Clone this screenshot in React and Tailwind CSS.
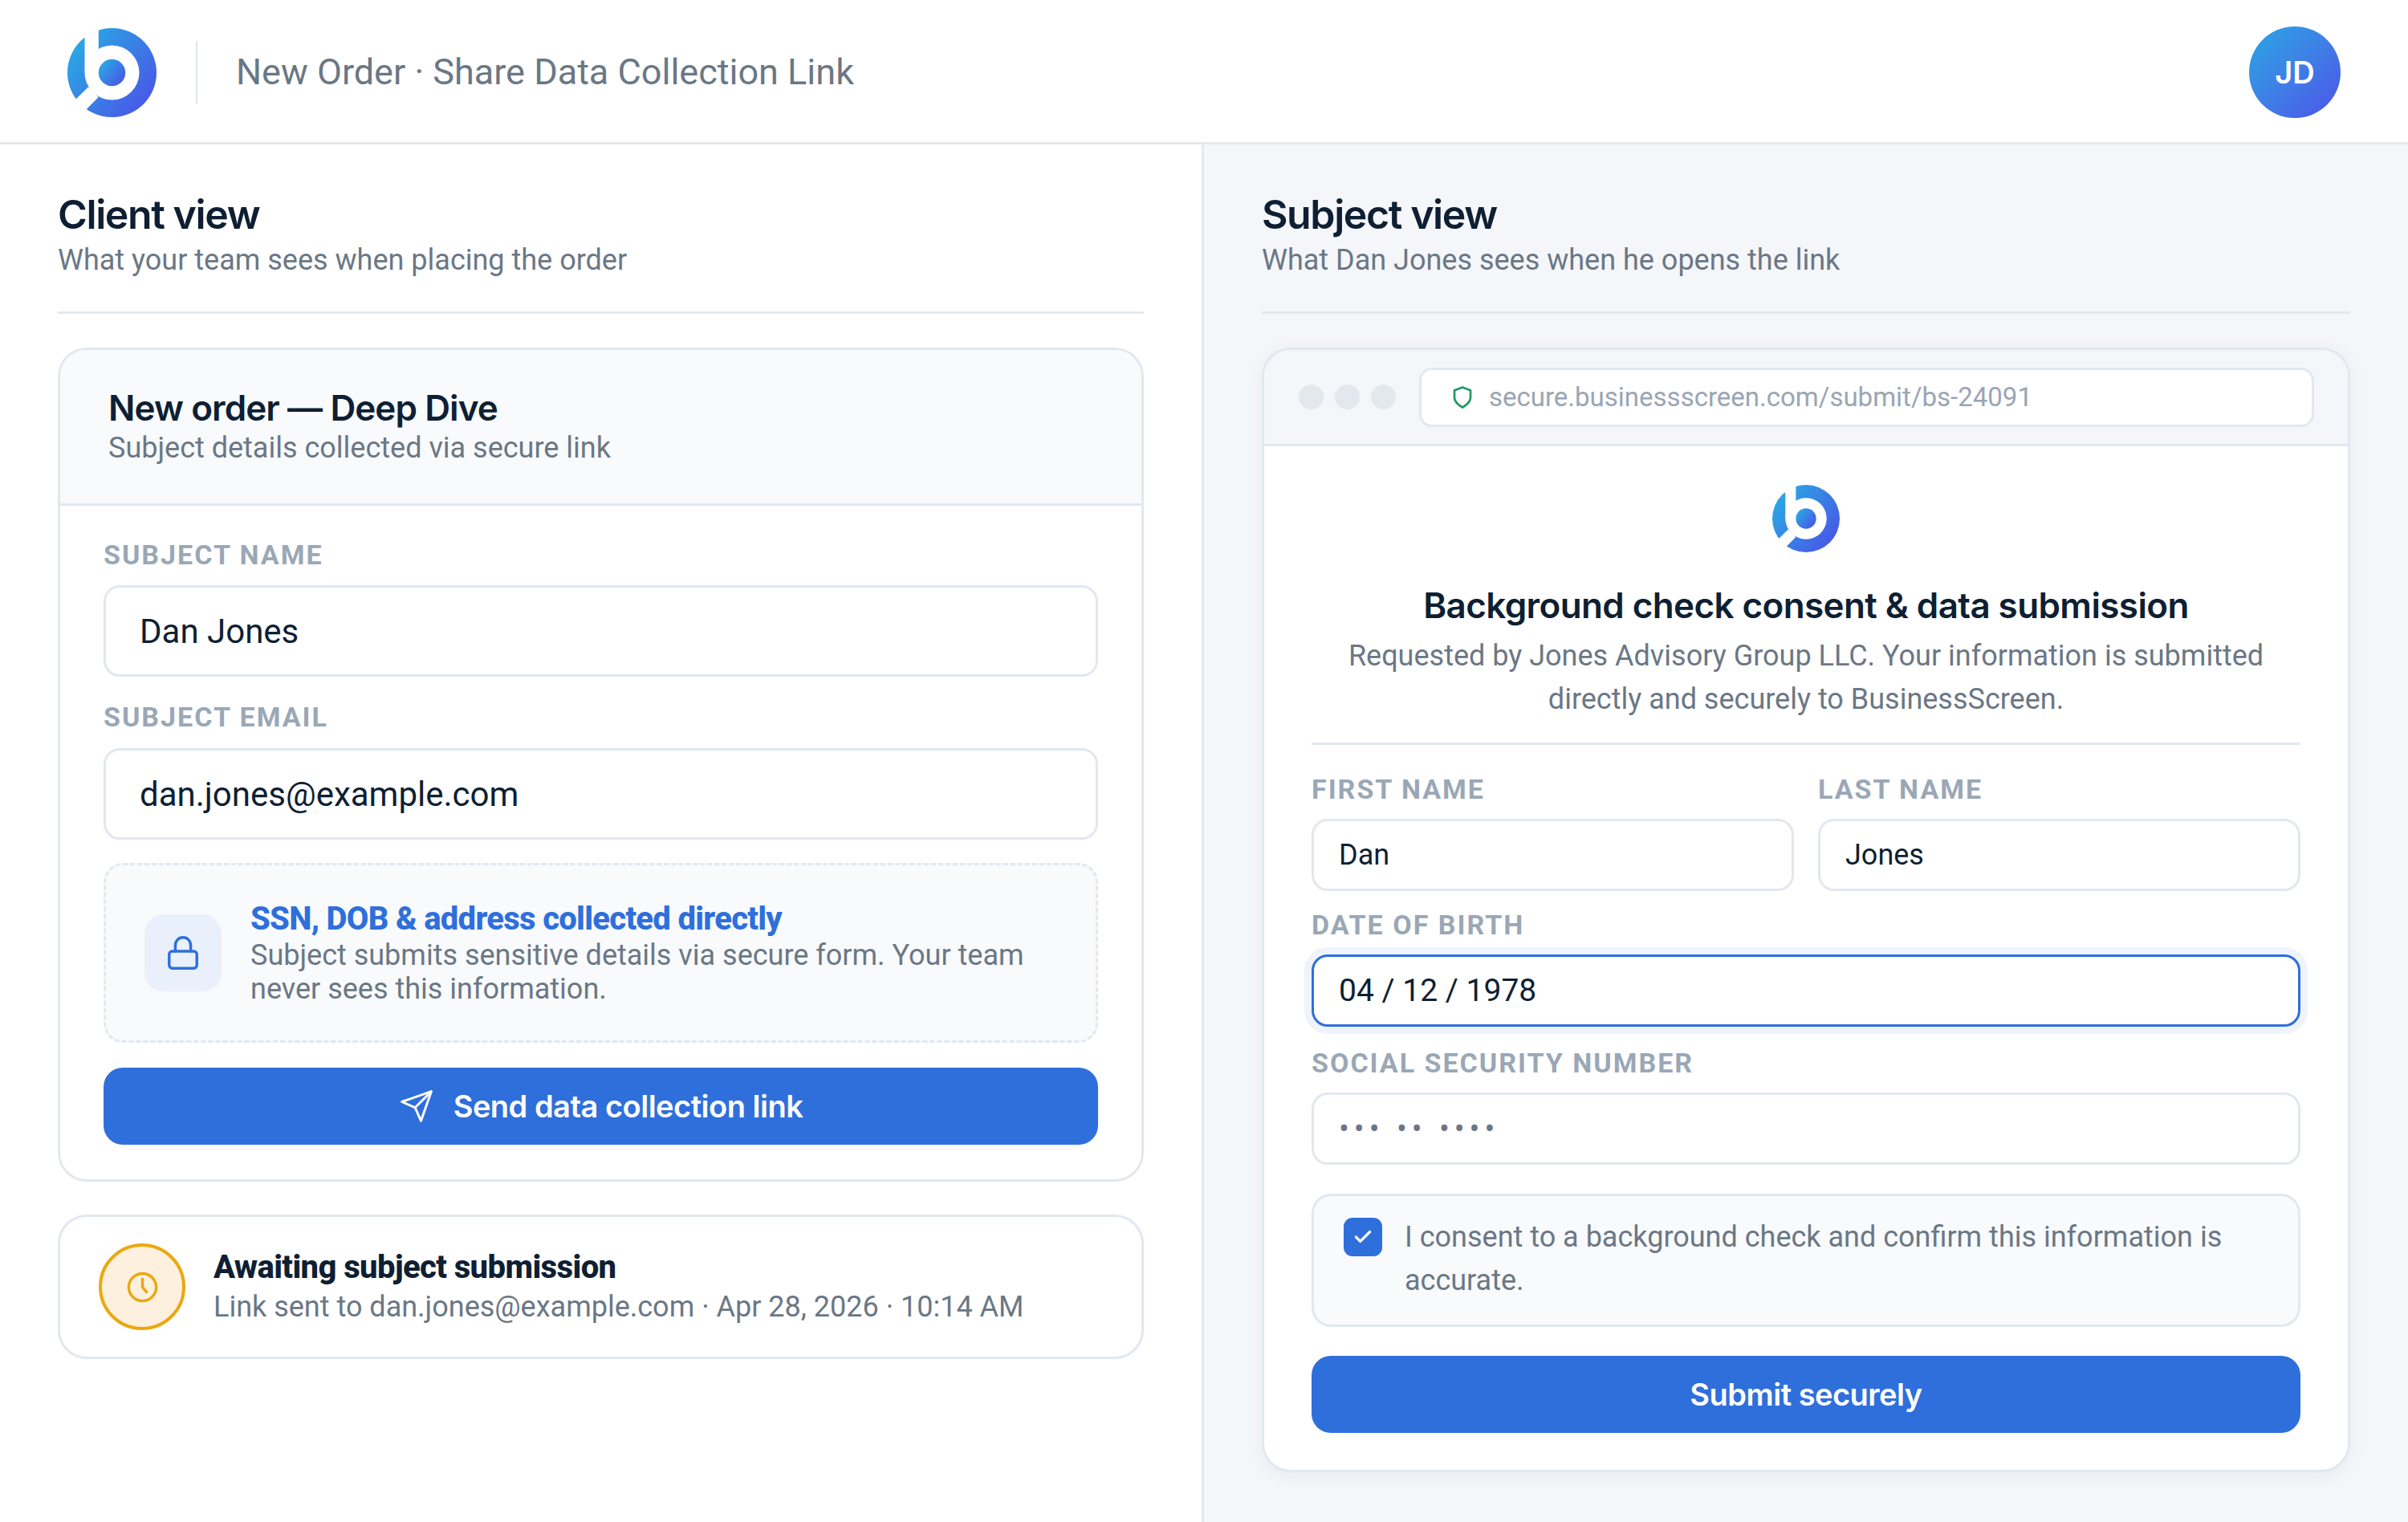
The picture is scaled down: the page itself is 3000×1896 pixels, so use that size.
import { FiSend, FiShield } from 'react-icons/fi'
import { Lock, Check } from 'lucide-react'

const Logo = ({ id, className }) => (
  <svg viewBox="0 0 111 111" className={className}>
    <defs>
      <linearGradient id={id} x1="0" y1="0.1" x2="1" y2="0.9">
        <stop offset="0" stopColor="#27b0e3" />
        <stop offset="1" stopColor="#4b50e8" />
      </linearGradient>
    </defs>
    <circle cx="55.5" cy="55.5" r="55.5" fill={`url(#${id})`} />
    <rect x="21.5" y="-1" width="17.3" height="56" fill="#fff" />
    <polygon points="26,73.3 38.7,86 14,111 -1,100" fill="#fff" />
    <circle cx="55.5" cy="55.5" r="34" fill="#fff" />
    <circle cx="55.5" cy="55.5" r="16.7" fill={`url(#${id})`} />
  </svg>
)

const Label = ({ children }) => (
  <div className="text-[34px] leading-[42px] font-bold tracking-[2px] text-[#9aa7b6] uppercase">{children}</div>
)

const BigInput = ({ children }) => (
  <div className="h-[114px] rounded-[20px] border-[3px] border-[#e2e8f0] bg-white px-[42px] flex items-center text-[42px] text-[#0f1f33]">
    {children}
  </div>
)

const SmallInput = ({ children, className }) => (
  <div className={`h-[90px] rounded-[20px] border-[3px] bg-white px-[31px] flex items-center ${className}`}>
    {children}
  </div>
)

const PanelHead = ({ title, sub }) => (
  <div className="h-[155px] border-b-[3px] border-[#e2e8f0] mb-[42px]">
    <h2 className="font-['Inter',sans-serif] text-[50px] leading-[62px] font-semibold tracking-[-1.4px] text-[#0f1f33] mt-[-4px]">{title}</h2>
    <p className="text-[36px] leading-[46px] text-[#6b7785] mt-[3px]">{sub}</p>
  </div>
)

export default function App() {
  return (
    <div className="w-[3000px] h-[1896px] bg-white flex flex-col overflow-hidden font-['Roboto',sans-serif]">
      {/* top bar */}
      <header className="h-[180px] shrink-0 border-b-[3px] border-[#e5e8ee] pl-[84px] pr-[84px] pt-[3px] flex items-center">
        <Logo id="logo-top" className="w-[111px] h-[111px]" />
        <div className="w-[2px] h-[78px] bg-[#dfe4ea] ml-[49px] mr-[48px]" />
        <div className="text-[45px] text-[#6b7785]">New Order · Share Data Collection Link</div>
        <div className="ml-auto w-[114px] h-[114px] rounded-full bg-gradient-to-br from-[#27a6e3] to-[#4b50e8] flex items-center justify-center font-['Inter',sans-serif] font-semibold text-[38px] text-white">
          JD
        </div>
      </header>

      <main className="flex-1 grid grid-cols-2">
        {/* client */}
        <section className="border-r-[3px] border-[#e5e8ee] pt-[60px] px-[72px]">
          <PanelHead title="Client view" sub="What your team sees when placing the order" />
          <div className="rounded-[36px] border-[3px] border-[#e2e8f0] overflow-hidden">
            <div className="h-[194px] bg-[#f8fafc] border-b-[3px] border-[#e2e8f0] px-[60px] flex flex-col justify-center">
              <div className="font-['Inter',sans-serif] text-[44px] leading-[54px] font-semibold tracking-[-0.9px] text-[#0f1f33] mt-[-2px]">New order — Deep Dive</div>
              <div className="text-[36px] leading-[46px] text-[#6b7785]">Subject details collected via secure link</div>
            </div>
            <div className="px-[54px] pt-[40px] pb-[43px]">
              <Label>Subject name</Label>
              <div className="mt-[17px]"><BigInput>Dan Jones</BigInput></div>
              <div className="mt-[29px]"><Label>Subject email</Label></div>
              <div className="mt-[18px]"><BigInput>dan.jones@example.com</BigInput></div>
              <div className="mt-[29px] h-[224px] rounded-[24px] border-[3px] border-dashed border-[#e2e8f0] bg-[#f8fafc] px-[48px] flex items-center gap-[36px]">
                <div className="w-[96px] h-[96px] shrink-0 rounded-[24px] bg-[#e9f0fb] flex items-center justify-center">
                  <Lock size={46} strokeWidth={1.8} className="text-[#2f6fdb]" />
                </div>
                <div>
                  <div className="text-[40px] leading-[48px] font-extrabold tracking-[-0.7px] text-[#2f6fdb]">SSN, DOB &amp; address collected directly</div>
                  <div className="text-[36px] leading-[42px] text-[#6b7785]">Subject submits sensitive details via secure form. Your team never sees this information.</div>
                </div>
              </div>
              <button className="mt-[31px] w-full h-[96px] rounded-[24px] bg-[#2f6fdb] flex items-center justify-center gap-[24px] text-white font-['Inter',sans-serif] font-semibold text-[38px] tracking-[-0.5px]">
                <FiSend size={44} strokeWidth={1.6} />
                Send data collection link
              </button>
            </div>
          </div>
          <div className="mt-[41px] h-[180px] rounded-[36px] border-[3px] border-[#e2e8f0] pl-[48px] pr-[47px] flex items-center gap-[35px]">
            <div className="w-[108px] h-[108px] shrink-0 rounded-full border-[4px] border-[#eba80f] bg-[#fdf0de] flex items-center justify-center">
              <svg viewBox="0 0 24 24" className="w-[41px] h-[41px]" fill="none" stroke="#eba80f" strokeWidth="2" strokeLinecap="round" strokeLinejoin="round">
                <circle cx="12" cy="12" r="10" />
                <path d="M12 6v6l3 3.6" />
              </svg>
            </div>
            <div>
              <div className="text-[40px] leading-[48px] font-extrabold tracking-[-0.6px] text-[#0f1f33]">Awaiting subject submission</div>
              <div className="text-[36px] leading-[46px] text-[#6b7785] mt-[2px]">Link sent to dan.jones@example.com · Apr 28, 2026 · 10:14 AM</div>
            </div>
          </div>
        </section>

        {/* subject */}
        <section className="bg-[#f4f6fa] pt-[60px] px-[72px]">
          <PanelHead title="Subject view" sub="What Dan Jones sees when he opens the link" />
          <div className="rounded-[36px] border-[3px] border-[#e2e8f0] bg-white overflow-hidden shadow-[0_4px_24px_rgba(15,31,51,0.05)]">
            <div className="h-[120px] bg-[#f4f6fa] border-b-[3px] border-[#e2e8f0] pl-[43px] pr-[42px] flex items-center">
              <div className="flex gap-[14px]">
                <div className="w-[31px] h-[31px] rounded-full bg-[#e2e8ee]" />
                <div className="w-[31px] h-[31px] rounded-full bg-[#e2e8ee]" />
                <div className="w-[31px] h-[31px] rounded-full bg-[#e2e8ee]" />
              </div>
              <div className="ml-[29px] flex-1 h-[74px] rounded-[16px] border-[3px] border-[#e2e8f0] bg-white pl-[36px] flex items-center gap-[18px] text-[33px] text-[#9aa5b4]">
                <FiShield size={30} strokeWidth={2.2} className="text-[#1e9a63]" />
                secure.businessscreen.com/submit/bs-24091
              </div>
            </div>
            <div className="px-[59px] pt-[48px] pb-[46px]">
              <div className="flex justify-center"><Logo id="logo-form" className="w-[84px] h-[84px]" /></div>
              <div className="mt-[39px] text-center font-['Inter',sans-serif] text-[44px] leading-[54px] font-semibold tracking-[-0.6px] text-[#0f1f33]">
                Background check consent &amp; data submission
              </div>
              <div className="mt-[9px] mx-auto w-[1180px] text-center text-[36px] leading-[54px] text-[#6b7785]">
                Requested by Jones Advisory Group LLC. Your information is submitted directly and securely to BusinessScreen.
              </div>
              <div className="mt-[27px] h-[3px] bg-[#e2e8f0]" />
              <div className="mt-[34px] grid grid-cols-2 gap-[30px]">
                <div>
                  <Label>First name</Label>
                  <div className="mt-[16px]"><SmallInput className="border-[#e2e8f0] text-[36px] text-[#0f1f33]">Dan</SmallInput></div>
                </div>
                <div>
                  <Label>Last name</Label>
                  <div className="mt-[16px]"><SmallInput className="border-[#e2e8f0] text-[36px] text-[#0f1f33]">Jones</SmallInput></div>
                </div>
              </div>
              <div className="mt-[21px]"><Label>Date of birth</Label></div>
              <div className="mt-[16px]">
                <SmallInput className="border-[#2f6fdb] shadow-[0_0_0_9px_#eef3fc] text-[39px] text-[#0f1f33]">04 / 12 / 1978</SmallInput>
              </div>
              <div className="mt-[24px]"><Label>Social security number</Label></div>
              <div className="mt-[16px]">
                <SmallInput className="border-[#e2e8f0] text-[38px] text-[#6b7688] tracking-[6px]">••• •• ••••</SmallInput>
              </div>
              <div className="mt-[36px] h-[166px] rounded-[24px] border-[3px] border-[#e2e8f0] bg-[#f8fafc] pl-[37px] pr-[60px] pt-[27px] flex gap-[28px]">
                <div className="w-[48px] h-[48px] shrink-0 rounded-[11px] bg-[#2f6fdb] flex items-center justify-center">
                  <Check size={26} strokeWidth={3} className="text-white" />
                </div>
                <div className="text-[36px] leading-[54px] text-[#6b7785] mt-[-3px]">
                  I consent to a background check and confirm this information is accurate.
                </div>
              </div>
              <button className="mt-[36px] w-full h-[96px] rounded-[24px] bg-[#2f6fdb] text-white font-['Inter',sans-serif] font-semibold text-[38px] tracking-[-0.5px]">
                Submit securely
              </button>
            </div>
          </div>
        </section>
      </main>
    </div>
  )
}
